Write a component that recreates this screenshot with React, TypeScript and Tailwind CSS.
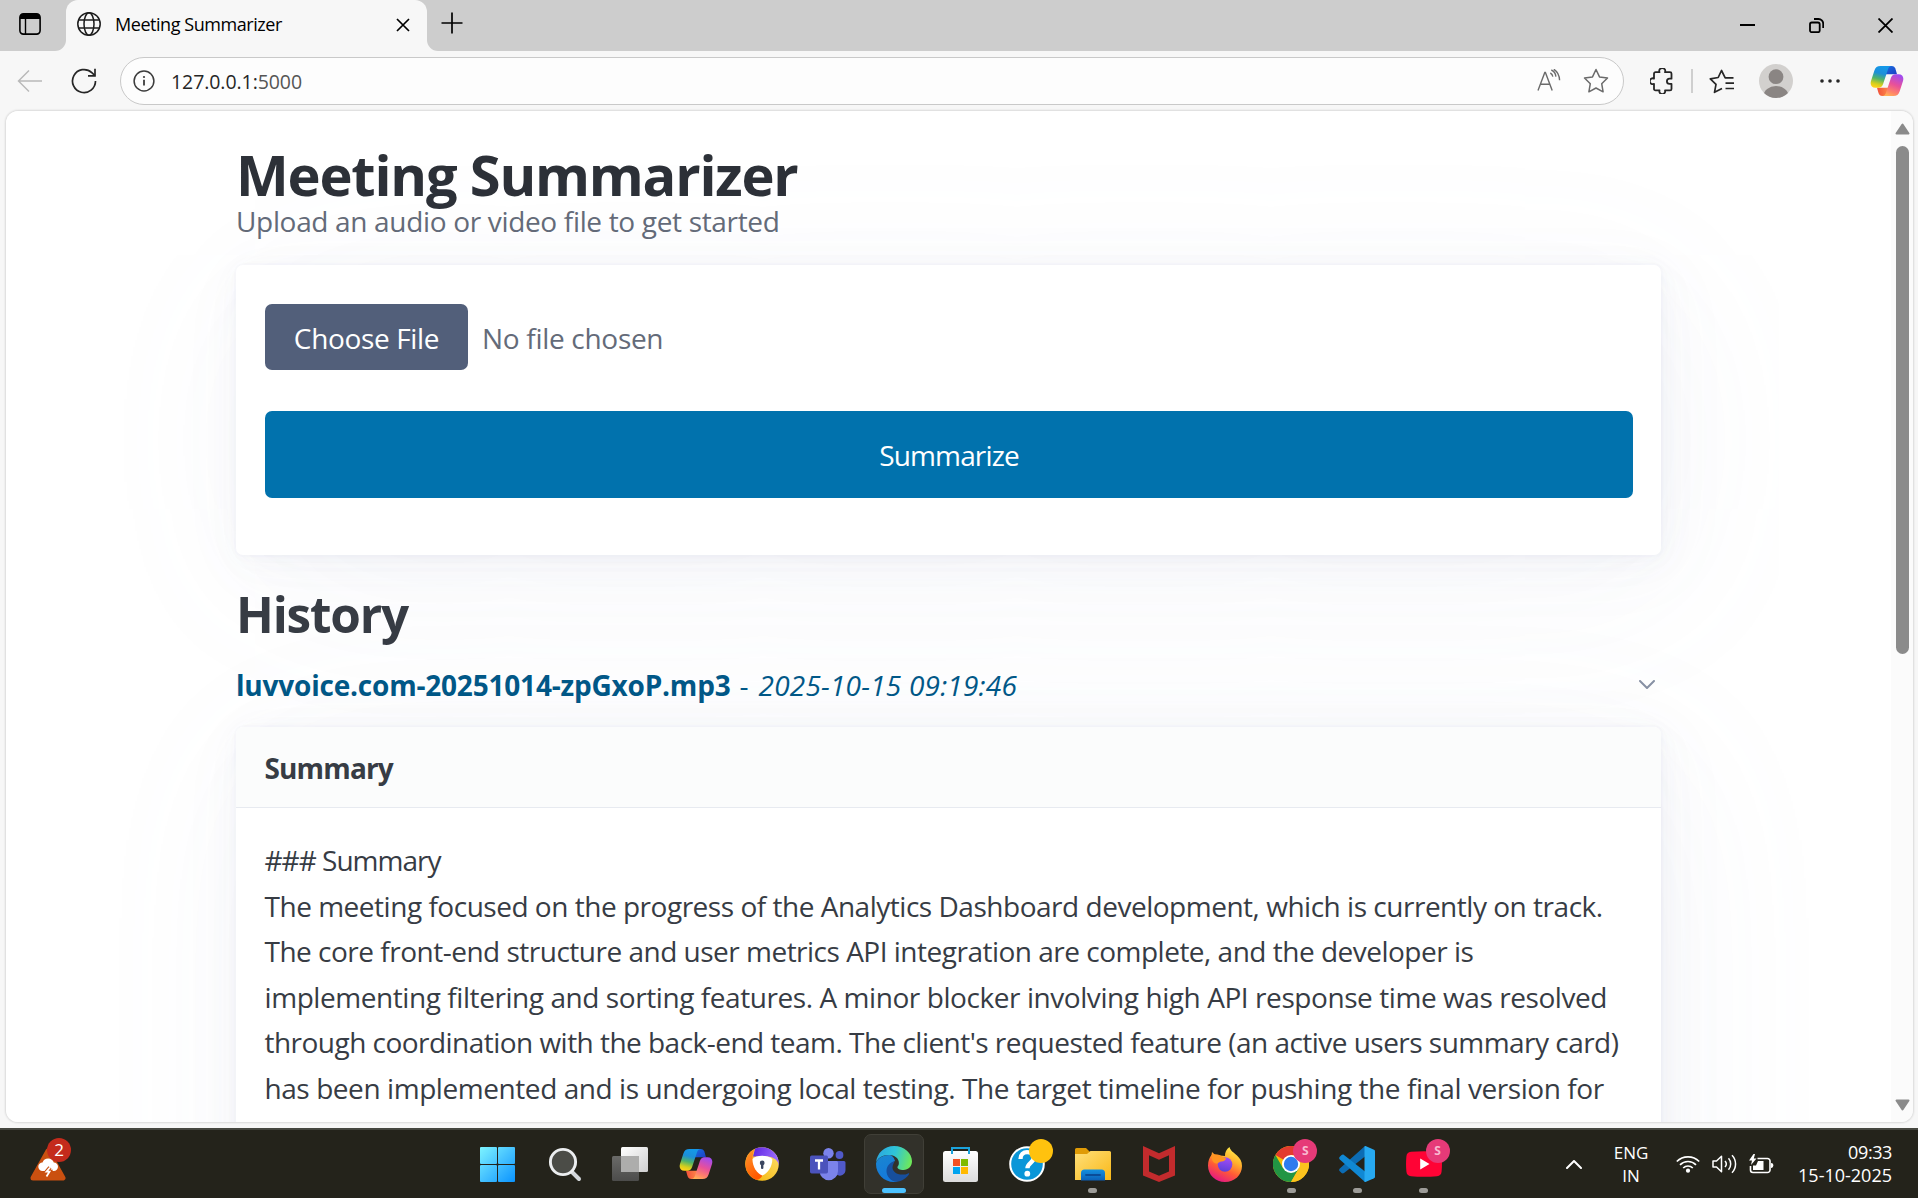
import type { ReactNode } from "react";

/* ---------- shared marks ---------- */

function CopilotMark({ id, className }: { id: string; className: string }) {
  return (
    <svg viewBox="0 0 34 32" className={className}>
      <defs>
        <linearGradient id={id + "a"} x1="0.6" y1="0" x2="0.35" y2="1">
          <stop offset="0.05" stopColor="#1598e8" />
          <stop offset="0.35" stopColor="#1c8fd8" />
          <stop offset="0.6" stopColor="#4fb36a" />
          <stop offset="0.85" stopColor="#d6cf1c" />
          <stop offset="1" stopColor="#ffd21a" />
        </linearGradient>
        <linearGradient id={id + "b"} x1="0.7" y1="0" x2="0.3" y2="1">
          <stop offset="0" stopColor="#a04bf0" />
          <stop offset="0.45" stopColor="#e8509a" />
          <stop offset="0.8" stopColor="#ff8468" />
          <stop offset="1" stopColor="#ffb056" />
        </linearGradient>
        <linearGradient id={id + "c"} x1="0" y1="0" x2="1" y2="1">
          <stop offset="0" stopColor="#1a6fe0" />
          <stop offset="1" stopColor="#1b3fc4" />
        </linearGradient>
        <linearGradient id={id + "d"} x1="0" y1="0" x2="1" y2="0">
          <stop offset="0" stopColor="#f0503a" />
          <stop offset="1" stopColor="#ff8a4a" />
        </linearGradient>
      </defs>
      <path d="M15 1h6.500c2.600 0 3.600 1.500 4.300 4l1.200 4.300H15z" fill={`url(#${id}c)`} />
      <path d="M19 31h-6.500c-2.600 0-3.600-1.500-4.300-4L7 22.700H19z" fill={`url(#${id}d)`} />
      <path d="M10.500 1H22c-2.500 0-3.400 1.300-4.300 4.200L13.600 17.500c-1 3.600-2.200 5.300-6 5.300H5.500C1.500 22.800-.1 20 1 16L4.400 5.600C5.400 2.400 7.200 1 10.500 1z" fill={`url(#${id}a)`} />
      <path d="M23.500 31H12c2.500 0 3.400-1.300 4.300-4.200L20.400 14.500c1-3.600 2.200-5.300 6-5.300h2.100c4 0 5.600 2.800 4.500 6.800l-3.400 10.400c-1 3.200-2.800 4.600-6.100 4.600z" fill={`url(#${id}b)`} />
    </svg>
  );
}

function Chevron({ up = false, className }: { up?: boolean; className: string }) {
  return (
    <svg viewBox="0 0 16 9" fill="none" stroke="currentColor" strokeWidth="2" strokeLinecap="round" strokeLinejoin="round" className={className}>
      <path d={up ? "M1 8l7-7 7 7" : "M1 1l7 7 7-7"} />
    </svg>
  );
}

/* ---------- browser chrome ---------- */

function TabStrip() {
  return (
    <div className="flex h-[51px] shrink-0 items-stretch bg-[#cdcdcd] text-black">
      <div className="flex w-[66px] items-center justify-center bg-[#f7f7f7]">
        <div className="flex h-full w-full items-center rounded-br-[11px] bg-[#cdcdcd] pl-[19px] pb-[3px]">
          <svg viewBox="0 0 22 22" className="size-[22px]" fill="none" stroke="currentColor" strokeWidth="1.6">
            <rect x="0.900" y="0.900" width="20.200" height="20.200" rx="3.500" />
            <path d="M1 4a3 3 0 0 1 3-3h14a3 3 0 0 1 3 3v2H1z" fill="currentColor" stroke="none" />
            <path d="M6.500 5v16" strokeWidth="1.400" />
          </svg>
        </div>
      </div>
      <div className="w-[361px] bg-[#cdcdcd]">
        <div className="flex h-full items-center rounded-t-[12px] bg-[#f7f7f7] pl-[11px] pr-[17px] pb-[3px]">
          <svg viewBox="0 0 24 24" className="size-6" fill="none" stroke="#1c1c1c" strokeWidth="1.500">
            <circle cx="12" cy="12" r="11.200" />
            <ellipse cx="12" cy="12" rx="5" ry="11.200" />
            <path d="M1.800 8h20.400M1.800 16h20.400" />
          </svg>
          <span className="ml-[14px] flex-1 whitespace-nowrap text-[18px] tracking-[-0.450px]">Meeting Summarizer</span>
          <svg viewBox="0 0 14 14" className="mt-[2px] size-[14px]" fill="none" stroke="currentColor" strokeWidth="1.700">
            <path d="M1 1l12 12M13 1L1 13" />
          </svg>
        </div>
      </div>
      <div className="flex flex-1 bg-[#f7f7f7]">
        <div className="flex flex-1 items-center rounded-bl-[11px] bg-[#cdcdcd] pl-[14px] pr-[25px]">
          <svg viewBox="0 0 22 22" className="mb-[5px] size-[22px]" fill="none" stroke="currentColor" strokeWidth="1.700">
            <path d="M11 .5v21M.5 11h21" />
          </svg>
          <div className="ml-auto flex items-center gap-[54px]">
            <svg viewBox="0 0 15 15" className="size-[15px]" fill="none" stroke="currentColor" strokeWidth="2">
              <path d="M0 7h15" />
            </svg>
            <svg viewBox="0 0 15 15" className="size-[15px]" fill="none" stroke="currentColor" strokeWidth="1.800">
              <rect x="1" y="4.500" width="9.700" height="9.700" rx="1.800" />
              <path d="M5 1h4.500A4.700 4.700 0 0 1 14.200 5.700V10" />
            </svg>
            <svg viewBox="0 0 15 15" className="size-[15px]" fill="none" stroke="currentColor" strokeWidth="1.800">
              <path d="M.5.5l14 14M14.500.5l-14 14" />
            </svg>
          </div>
        </div>
      </div>
    </div>
  );
}

function AddressRow() {
  return (
    <div className="flex h-[60px] shrink-0 items-center bg-[#f7f7f7] pl-[17px] pr-[14px] text-[#262626]">
      <svg viewBox="0 0 26 24" className="w-[26px] text-[#b9b9b9]" fill="none" stroke="currentColor" strokeWidth="1.500">
        <path d="M25 12H1.500M12 1.500L1.500 12 12 22.500" />
      </svg>
      <svg viewBox="0 0 26 26" className="ml-[28px] w-[26px]" fill="none" stroke="currentColor" strokeWidth="1.700">
        <path d="M24.500 13A11.500 11.500 0 1 1 20.800 4.600L24 7.700" />
        <path d="M24 .8v7h-7" />
      </svg>
      <div className="ml-[23px] flex h-12 w-[1504px] items-center rounded-full border-[1.500px] border-[#c9c9c9] bg-[#fdfdfd] pl-[12px] pr-[14px]">
        <svg viewBox="0 0 22 22" className="size-[22px]" fill="none" stroke="#3c3c3c" strokeWidth="1.500">
          <circle cx="11" cy="11" r="9.900" />
          <path d="M11 9.800v5.700" strokeWidth="1.800" />
          <circle cx="11" cy="7" r="1.100" fill="#3c3c3c" stroke="none" />
        </svg>
        <span className="ml-[16px] flex-1 pt-[1px] text-[19.500px] tracking-[-0.070px]">
          127.0.0.1:<span className="text-[#555]">5000</span>
        </span>
        <svg viewBox="0 0 24 22" className="mb-[3px] w-6" fill="none" stroke="#6b6b6b" strokeWidth="1.400">
          <path d="M1 21.500L7.800 3.500h.6l6.800 18M3.500 15.200h9.200" />
          <path d="M14.300 1c2.800 1.200 4.300 3.500 4.600 6.600M13.300 4c1.500.7 2.300 2 2.500 3.700M16.800.3c3.500 2 5.500 5.500 5.800 11" />
        </svg>
        <svg viewBox="0 0 26 26" className="ml-[22px] w-[26px]" fill="none" stroke="#6b6b6b" strokeWidth="1.500" strokeLinejoin="round">
          <path d="M13 1.500l3.500 7.400 8 1.100-5.800 5.700 1.400 8.100L13 20l-7.100 3.800 1.400-8.100L1.500 10l8-1.100z" />
        </svg>
      </div>
      <svg viewBox="0 0 24 26" className="ml-[26px] w-6" fill="none" stroke="currentColor" strokeWidth="1.800" strokeLinejoin="round">
        <path d="M5.500 4.200h4a3 3 0 1 1 5.500 0h5a1.500 1.500 0 0 1 1.500 1.500v5h-2a2.600 2.600 0 1 0 0 5.200h2v5a1.500 1.500 0 0 1-1.500 1.500h-5a2.900 2.900 0 1 1-5.500 0h-4a1.500 1.500 0 0 1-1.500-1.500v-5.100a2.900 2.900 0 1 1 0-5.200V5.700a1.500 1.500 0 0 1 1.500-1.500z" />
      </svg>
      <div className="ml-[17px] h-6 w-[1.500px] bg-[#cfcfcf]" />
      <svg viewBox="0 0 26 25" className="ml-[16px] w-[26px]" fill="none" stroke="currentColor" strokeWidth="1.700" strokeLinejoin="round">
        <path d="M24.500 8.800H16.200L12.500 1.500 9.200 8.500 1.300 9.800l5.700 5.500-1.500 8 7.500-3.800" />
        <path d="M16.500 14.200H25M16.500 19.500H25" />
      </svg>
      <svg viewBox="0 0 34 34" className="ml-[24px] w-[34px]">
        <clipPath id="avatar"><circle cx="17" cy="17" r="17" /></clipPath>
        <g clipPath="url(#avatar)">
          <rect width="34" height="34" fill="#d2d0ce" />
          <circle cx="17" cy="12.700" r="7.400" fill="#8a8583" />
          <ellipse cx="17" cy="32" rx="12.500" ry="10" fill="#8a8583" />
        </g>
      </svg>
      <svg viewBox="0 0 20 4" className="ml-[27px] w-5" fill="currentColor">
        <circle cx="2" cy="2" r="1.800" /><circle cx="10" cy="2" r="1.800" /><circle cx="18" cy="2" r="1.800" />
      </svg>
      <CopilotMark id="cpTop" className="ml-auto w-[34px]" />
    </div>
  );
}

/* ---------- page ---------- */

const SUMMARY_LINES: { text: string; spacing: string }[] = [
  { text: "### Summary", spacing: "tracking-[-1px]" },
  { text: "The meeting focused on the progress of the Analytics Dashboard development, which is currently on track.", spacing: "tracking-[-0.480px]" },
  { text: "The core front-end structure and user metrics API integration are complete, and the developer is", spacing: "tracking-[-0.500px]" },
  { text: "implementing filtering and sorting features. A minor blocker involving high API response time was resolved", spacing: "tracking-[-0.430px]" },
  { text: "through coordination with the back-end team. The client's requested feature (an active users summary card)", spacing: "tracking-[-0.530px]" },
  { text: "has been implemented and is undergoing local testing. The target timeline for pushing the final version for", spacing: "tracking-[-0.430px]" },
];

function Card({ className, children }: { className: string; children: ReactNode }) {
  return (
    <section
      className={
        "rounded-[7px] shadow-[0.44px_0.88px_5.3px_rgba(129,145,181,0.017),1px_2px_12.2px_rgba(129,145,181,0.024),1.9px_3.8px_22.8px_rgba(129,145,181,0.03),3.4px_6.8px_41px_rgba(129,145,181,0.036),6.3px_12.7px_76px_rgba(129,145,181,0.043),15.2px_30.4px_182px_rgba(129,145,181,0.06),0_0_0_1.9px_rgba(129,145,181,0.015)] " +
        className
      }
    >
      {children}
    </section>
  );
}

function Page() {
  return (
    <main className="flex-1 overflow-hidden bg-white pl-[230px] pt-[34px] text-[28px] text-[#373c44]">
      <div className="flex w-[1425px] flex-col">
        <h1 className="text-[56px] font-bold leading-[59px] tracking-[-1.200px] text-[#2d3138]">Meeting Summarizer</h1>
        <p className="leading-[34px] tracking-[-0.330px] text-[#646b79]">Upload an audio or video file to get started</p>

        <Card className="mt-[27px] h-[290px] bg-white pl-[29px] pr-[28px] pt-[39px]">
          <div className="flex items-center text-[#646b79]">
            <button className="h-[66px] w-[203px] rounded-[7px] bg-[#525f7a] pt-[2px] tracking-[-0.350px] text-white">Choose File</button>
            <span className="ml-[14px] pt-[2px] tracking-[-0.300px]">No file chosen</span>
          </div>
          <button className="mt-[41px] h-[87px] w-full rounded-[7px] bg-[#0172ad] tracking-[-0.850px] text-white">Summarize</button>
        </Card>

        <h2 className="mt-[32px] text-[49.500px] font-bold leading-[55px] tracking-[-1.200px]">History</h2>

        <div className="mt-[20px] flex h-[46px] items-center justify-between pr-[6px] leading-[46px] text-[#015887]">
          <div className="flex whitespace-pre">
            <strong className="font-bold tracking-[-0.200px]">luvvoice.com-20251014-zpGxoP.mp3</strong>
            <span className="ml-[9px] mr-[10px]">-</span>
            <em className="tracking-[0.200px]">2025-10-15 09:19:46</em>
          </div>
          <Chevron className="mb-[2px] w-4 text-[#8891a4]" />
        </div>

        <Card className="mt-[19px] h-[700px] bg-white">
          <header className="h-[81px] rounded-t-[7px] border-b-[1.500px] border-[#e7eaf0] bg-[#fbfcfc] pl-[28.500px] pt-[19px] font-bold leading-[45.600px] tracking-[-0.850px]">
            Summary
          </header>
          <div className="pl-[28.500px] pt-[30px] leading-[45.600px]">
            {SUMMARY_LINES.map((line) => (
              <p key={line.text} className={"whitespace-nowrap " + line.spacing}>{line.text}</p>
            ))}
          </div>
        </Card>
      </div>
    </main>
  );
}

function Scrollbar() {
  return (
    <aside className="flex w-[22px] shrink-0 flex-col items-center bg-[#fbfbfb] pb-[11px] pl-[1px] pt-[12px] text-[#8b8b8b]">
      <svg viewBox="0 0 15 12" className="w-[15px]" fill="currentColor" stroke="currentColor" strokeWidth="2" strokeLinejoin="round">
        <path d="M7.500 1.500L13.500 10.500h-12z" />
      </svg>
      <div className="mt-[11px] h-[508px] w-[13px] rounded-full bg-[#8b8b8b]" />
      <svg viewBox="0 0 15 12" className="mt-auto w-[15px]" fill="currentColor" stroke="currentColor" strokeWidth="2" strokeLinejoin="round">
        <path d="M7.500 10.500L1.500 1.500h12z" />
      </svg>
    </aside>
  );
}

/* ---------- taskbar ---------- */

function StartIcon() {
  return (
    <svg viewBox="0 0 35 35" className="size-[35px]">
      <linearGradient id="win" gradientUnits="userSpaceOnUse" x1="0" y1="0" x2="35" y2="35">
        <stop offset="0" stopColor="#7df4ff" /><stop offset="0.500" stopColor="#46c2ff" /><stop offset="1" stopColor="#0a94ff" />
      </linearGradient>
      <g fill="url(#win)">
        <rect width="17" height="17" rx="1" /><rect x="18" width="17" height="17" rx="1" />
        <rect y="18" width="17" height="17" rx="1" /><rect x="18" y="18" width="17" height="17" rx="1" />
      </g>
    </svg>
  );
}

function SearchIcon() {
  return (
    <svg viewBox="0 0 34 35" className="ml-[2px] w-[34px]" fill="none">
      <path d="M22.500 23.500L31 32" stroke="#d4d8dc" strokeWidth="4" strokeLinecap="round" />
      <circle cx="15" cy="15" r="12.600" fill="#4b4c47" stroke="#eceef0" strokeWidth="2.900" />
    </svg>
  );
}

function TaskViewIcon() {
  return (
    <svg viewBox="0 0 36 34" className="ml-[1px] w-9">
      <linearGradient id="tv1" x1="0" y1="0" x2="1" y2="1"><stop offset="0" stopColor="#fff" /><stop offset="1" stopColor="#cfcfcf" /></linearGradient>
      <linearGradient id="tv2" x1="0" y1="0" x2="0" y2="1"><stop offset="0" stopColor="#6a6a68" /><stop offset="1" stopColor="#4c4c4b" /></linearGradient>
      <rect y="9" width="27" height="25" rx="1.500" fill="url(#tv2)" />
      <rect x="9" width="27" height="25" rx="1.500" fill="url(#tv1)" />
      <path d="M9 9h18v16H10.500A1.500 1.500 0 0 1 9 23.500z" fill="#adadac" />
    </svg>
  );
}

function SecureBrowserIcon() {
  return (
    <svg viewBox="0 0 34 34" className="w-[34px]">
      <linearGradient id="sb1" x1="0" y1="0" x2="1" y2="0.300"><stop offset="0" stopColor="#5b21e0" /><stop offset="1" stopColor="#9b6bff" /></linearGradient>
      <linearGradient id="sb2" x1="0" y1="0" x2="0.400" y2="1"><stop offset="0" stopColor="#ff9a2e" /><stop offset="1" stopColor="#ff5a00" /></linearGradient>
      <linearGradient id="sb3" x1="0" y1="1" x2="1" y2="0"><stop offset="0" stopColor="#f2b200" /><stop offset="1" stopColor="#ffe070" /></linearGradient>
      <circle cx="17" cy="17" r="16.800" fill="url(#sb3)" />
      <path d="M10 1.700A17 17 0 0 1 33.800 19c.2-5-5-9.500-12-9.500H8z" fill="url(#sb1)" />
      <path d="M10 1.700A17 17 0 0 0 11.500 33C14 33 17 30 17.500 28L8 15C7 10 8 5 10 1.700z" fill="url(#sb2)" />
      <path d="M7.500 12c2-2 5.500-3.200 9.500-3.200s8 1.200 10.300 3.200c0 8-4.300 14-10 16.600C11.500 26 7.500 20 7.500 12z" fill="#fff" />
      <circle cx="17.200" cy="16" r="2.400" fill="#3b4660" /><rect x="16" y="17" width="2.400" height="5" rx="1" fill="#3b4660" />
    </svg>
  );
}

function TeamsIcon() {
  return (
    <svg viewBox="0 0 36 33" className="w-9">
      <circle cx="29.500" cy="7" r="3.900" fill="#5059c9" />
      <path d="M25 13h9a1.500 1.500 0 0 1 1.500 1.500V22a5.700 5.700 0 0 1-9 4.600z" fill="#5059c9" />
      <circle cx="18.500" cy="5.300" r="5.200" fill="#7b83eb" />
      <path d="M10 13h16.500a1.500 1.500 0 0 1 1.500 1.500V23a9.200 9.200 0 0 1-18.400 0z" fill="#7b83eb" />
      <rect y="7.500" width="18" height="18" rx="1.700" fill="#4b53bc" />
      <path d="M5 12.500h8M9 12.500v9" stroke="#fff" strokeWidth="2.300" />
    </svg>
  );
}

function EdgeIcon() {
  return (
    <svg viewBox="0 0 36 36" className="w-9">
      <linearGradient id="ed1" x1="0" y1="0.300" x2="1" y2="0.500"><stop offset="0" stopColor="#2aa6e0" /><stop offset="0.500" stopColor="#2fc5d8" /><stop offset="1" stopColor="#6ee85a" /></linearGradient>
      <linearGradient id="ed2" x1="0" y1="0" x2="0.300" y2="1"><stop offset="0" stopColor="#1a86cf" /><stop offset="1" stopColor="#1479dc" /></linearGradient>
      <path d="M0 16.500C1 7 8.500 0 18 0c10.500 0 18 7.500 18 15.300 0 5-3.600 8.700-8.600 8.700-3.600 0-6-1.200-6-2.700 0-1 1.500-1.700 1.500-4.300C22.900 12 18.500 9 13 9 6 9 1.500 12.500 0 16.500z" fill="url(#ed1)" />
      <path d="M13 9c-7 0-12 4-13 8.500V18c0 10 8 18 18 18 1.500 0 3-.2 4-.5-6-1-9.500-6-9.500-11 0-4.500 2.500-8 6.500-9.500C18 11.500 16 9 13 9z" fill="url(#ed2)" />
      <path d="M18.500 15.200C14 16.200 10.500 20 10.500 25c0 5.500 4.500 10.500 10 10.800 5.500-.5 10-3.500 12.500-7.500.5-.8-.2-1.300-1-.9-1.500.8-3.500 1.200-5.500 1.200-6.500 0-11-4-9.800-8.700.4-1.800 1.300-3 1.800-4.700z" fill="#174f9c" />
    </svg>
  );
}

function StoreIcon() {
  return (
    <svg viewBox="0 0 35 35" className="w-[35px]">
      <linearGradient id="st" x1="0" y1="0" x2="0" y2="1"><stop offset="0" stopColor="#fff" /><stop offset="1" stopColor="#dcdcdc" /></linearGradient>
      <rect y="4" width="35" height="31" rx="2.500" fill="url(#st)" />
      <path d="M9 7V1h17v6" fill="none" stroke="#1ba3dc" strokeWidth="2" />
      <rect x="10" y="12" width="7" height="7" fill="#f25022" /><rect x="18" y="12" width="7" height="7" fill="#7fba00" />
      <rect x="10" y="20" width="7" height="7" fill="#00a4ef" /><rect x="18" y="20" width="7" height="7" fill="#ffb900" />
    </svg>
  );
}

function HelpIcon() {
  return (
    <svg viewBox="0 0 36 36" className="w-9">
      <circle cx="18" cy="18" r="16.800" fill="#0a96d8" stroke="#fff" strokeWidth="2" />
      <path d="M11.500 13c0-4.500 3-6.800 6.600-6.800 4 0 6.600 2.300 6.600 5.600 0 5-6.300 5.200-6.300 10.500" fill="none" stroke="#fff" strokeWidth="4.300" />
      <circle cx="18.300" cy="27.700" r="2.900" fill="#fff" />
    </svg>
  );
}

function ExplorerIcon() {
  return (
    <svg viewBox="0 0 36 34" className="w-9">
      <linearGradient id="ex" x1="0" y1="0" x2="1" y2="1"><stop offset="0" stopColor="#ffe07a" /><stop offset="1" stopColor="#f9b818" /></linearGradient>
      <linearGradient id="ex2" x1="0" y1="0" x2="0" y2="1"><stop offset="0" stopColor="#1490df" /><stop offset="1" stopColor="#0b60b8" /></linearGradient>
      <path d="M0 2.500A1.500 1.500 0 0 1 1.500 1H11l4 4H36v4H0z" fill="#e09b06" />
      <path d="M0 7h12l3.500-3H34.500A1.500 1.500 0 0 1 36 5.500V33H0z" fill="url(#ex)" />
      <path d="M6 33.500V26a3.500 3.500 0 0 1 3.500-3.500h17A3.500 3.500 0 0 1 30 26v7.500z" fill="url(#ex2)" />
      <path d="M11 28h14" stroke="#0a4c98" strokeWidth="1.800" strokeLinecap="round" />
    </svg>
  );
}

function ShieldMIcon() {
  return (
    <svg viewBox="0 0 32 36" className="w-8">
      <path fillRule="evenodd" fill="#c22b2d" d="M0 0l16 7.200L32 0v29.500L16 36 0 29.500zM6 9.200v16.300l10 4.300 10-4.300V9.200l-10 4.600z" />
    </svg>
  );
}

function FirefoxIcon() {
  return (
    <svg viewBox="0 0 34 35" className="w-[34px]">
      <linearGradient id="ff" x1="0.800" y1="0" x2="0.300" y2="1"><stop offset="0" stopColor="#fff44f" /><stop offset="0.350" stopColor="#ffb22c" /><stop offset="0.650" stopColor="#ff5a36" /><stop offset="1" stopColor="#e31587" /></linearGradient>
      <linearGradient id="ff2" x1="0.500" y1="0" x2="0.300" y2="1"><stop offset="0" stopColor="#a24df6" /><stop offset="1" stopColor="#5a3fd8" /></linearGradient>
      <path d="M21.500 0c1 4 4.500 5.500 7.500 8.500 3 2.800 5 6 5 10.500C34 28 26.500 35 17 35S0 28 0 18.500C0 14 1.500 10.500 3.500 8l.5-3 3.500 3.200c1.500-.3 3-.2 4.500.3L17 9c-.3-3.500 1.500-7 4.500-9z" fill="url(#ff)" />
      <circle cx="17" cy="17.500" r="7.300" fill="url(#ff2)" />
      <path d="M3.500 8c2-1 5.500-1 8 0 1.800.7 3.500 2.700 6.500 3-.2 2.200-2 3.200-4.500 3.500-2 .3-2.500 1.200-4 1.800C6 17.500 3 13 3.500 8z" fill="#ff9422" />
    </svg>
  );
}

function ChromeIcon() {
  return (
    <svg viewBox="0 0 36 36" className="w-9">
      <circle cx="18" cy="18" r="18" fill="#fbbc04" />
      <path d="M18 18L2.400 9A18 18 0 0 1 33.600 9H18z" fill="#e33b2e" />
      <path d="M2.400 9A18 18 0 0 0 18 36l7.800-13.500L18 18 10.200 22.500z" fill="#229544" />
      <path d="M18 9h15.600A18 18 0 0 1 18 36l7.800-13.500z" fill="#fcc31e" />
      <circle cx="18" cy="18" r="9" fill="#fff" /><circle cx="18" cy="18" r="7.200" fill="#2f7bee" />
    </svg>
  );
}

function CodeIcon() {
  return (
    <svg viewBox="0 0 36 36" className="w-9">
      <path d="M26 0v10.500L5 27c-1 .6-1.700.5-2.400-.1L.8 25.300c-.9-.8-.9-2 0-2.800z" fill="#0c6cb4" />
      <path d="M26 36V25.500L5 9c-1-.6-1.700-.5-2.400.1L.8 10.700c-.9.800-.9 2 0 2.800z" fill="#1088d4" />
      <path d="M26.500 0L35 3.700c.6.300 1 .8 1 1.500v25.600c0 .7-.4 1.200-1 1.500L26.500 36c-.8 0-1-.5-1-1.500v-33c0-1 .2-1.500 1-1.500z" fill="#27a9f1" />
    </svg>
  );
}

function YoutubeIcon() {
  return (
    <svg viewBox="0 0 36 26" className="w-9">
      <path d="M5 .8C13 0 23 0 31 .8c3 .3 4.300 1.800 4.600 4.700.5 5 .5 10 0 15-.3 2.900-1.600 4.400-4.600 4.700-8 .8-18 .8-26 0-3-.3-4.300-1.800-4.600-4.700-.5-5-.5-10 0-15C.7 2.600 2 1.100 5 .8z" fill="#ff0335" />
      <path d="M14.200 7.500l9.300 5.500-9.300 5.500z" fill="#fff" />
    </svg>
  );
}

function ProfileBadge() {
  return (
    <span className="absolute right-[7px] top-[9px] flex size-6 items-center justify-center rounded-full bg-[#e63a78] text-[12px] font-bold text-[#f9b9d0]">S</span>
  );
}

type TaskItem = { name: string; icon: ReactNode; running?: boolean; active?: boolean; badge?: ReactNode };

const TASKS: TaskItem[] = [
  { name: "Start", icon: <StartIcon /> },
  { name: "Search", icon: <SearchIcon /> },
  { name: "Task view", icon: <TaskViewIcon /> },
  { name: "Copilot", icon: <CopilotMark id="cpTask" className="w-[34px]" /> },
  { name: "Secure browser", icon: <SecureBrowserIcon /> },
  { name: "Teams", icon: <TeamsIcon /> },
  { name: "Edge", icon: <EdgeIcon />, active: true },
  { name: "Store", icon: <StoreIcon /> },
  { name: "Help", icon: <HelpIcon />, badge: <span className="absolute right-[7px] top-[9px] size-6 rounded-full bg-[#ffc20e]" /> },
  { name: "Explorer", icon: <ExplorerIcon />, running: true },
  { name: "Security", icon: <ShieldMIcon /> },
  { name: "Firefox", icon: <FirefoxIcon /> },
  { name: "Chrome", icon: <ChromeIcon />, running: true, badge: <ProfileBadge /> },
  { name: "Code", icon: <CodeIcon />, running: true },
  { name: "YouTube", icon: <YoutubeIcon />, running: true, badge: <ProfileBadge /> },
];

function Taskbar() {
  return (
    <footer className="flex h-[70px] shrink-0 border-t-2 border-[#464740] bg-[#24231b] text-white">
      <div className="w-[464.500px] pl-[30px] pt-[17px]">
        <div className="relative w-9">
          <svg viewBox="0 0 36 34" className="w-9">
            <path d="M18 4L33 31H3z" fill="#ca5010" stroke="#ca5010" strokeWidth="5" strokeLinejoin="round" />
            <path d="M12.500 24a4.200 4.200 0 0 1 0-8.400 6 6 0 0 1 11.300 0 4.200 4.200 0 0 1 0 8.400z" fill="#fff" />
            <path d="M20 20.500l-3.500 4.200h3L16.500 29.500" fill="none" stroke="#ca5010" strokeWidth="4" />
            <path d="M20 20.500l-3.500 4.200h3L16.500 29.500" fill="none" stroke="#fff" strokeWidth="1.800" />
          </svg>
          <span className="absolute -right-[5px] -top-[9px] flex size-6 items-center justify-center rounded-full bg-[#c42b1c] text-[17px]">2</span>
        </div>
      </div>
      <nav className="flex">
        {TASKS.map((t) => (
          <div key={t.name} className="relative flex w-[66.150px] justify-center pt-1">
            <div className={"flex h-[60px] w-[60px] items-center justify-center rounded-[7px] " + (t.active ? "border border-[#403f37] bg-[#32312a]" : "")}>
              {t.icon}
            </div>
            {t.active && <span className="absolute bottom-[5px] h-[5px] w-6 rounded-full bg-[#4cc2ff]" />}
            {t.running && <span className="absolute bottom-[5px] h-[5px] w-[9px] rounded-full bg-[#9d9c98]" />}
            {t.badge}
          </div>
        ))}
      </nav>
      <div className="ml-auto flex items-center pr-[26px] text-[18px] leading-[23px]">
        <Chevron up className="w-4" />
        <div className="ml-[31px] w-[36px] text-center text-[17px]">
          <div>ENG</div>
          <div>IN</div>
        </div>
        <svg viewBox="0 0 24 18" className="ml-[27px] w-6" fill="none" stroke="currentColor" strokeWidth="1.700">
          <path d="M.8 6.500a15.800 15.800 0 0 1 22.400 0M4 9.800a11.300 11.300 0 0 1 16 0M7.200 13a6.800 6.800 0 0 1 9.600 0" />
          <circle cx="12" cy="15.700" r="2.100" fill="currentColor" stroke="none" />
        </svg>
        <svg viewBox="0 0 25 20" className="ml-[12px] w-[25px]" fill="none" stroke="currentColor" strokeWidth="1.500" strokeLinejoin="round">
          <path d="M1 7v6h3.500l5 4.800V2.200L4.500 7z" />
          <path d="M13 7a4.500 4.500 0 0 1 0 6M16.500 4.300a8.500 8.500 0 0 1 0 11.400M20 1.200a12.700 12.700 0 0 1 0 17.600" />
        </svg>
        <svg viewBox="0 0 25 20" className="ml-[12px] w-[25px]" fill="none" stroke="currentColor" strokeWidth="1.600">
          <path d="M8.500 4.500H18.500a2.500 2.500 0 0 1 2.500 2.500v9a2.500 2.500 0 0 1-2.500 2.500H4A2.500 2.500 0 0 1 1.500 16V12" />
          <path d="M9 7h5.500v9H4v-4.500h3z" fill="currentColor" stroke="none" />
          <path d="M4.500 0L0 6.500h3L2 11l5.500-6.500H4.800L6 0z" fill="currentColor" stroke="none" />
          <path d="M22 9c1.500 0 2.300.8 2.300 2.300S23.500 14 22 14z" fill="currentColor" stroke="none" />
        </svg>
        <div className="ml-[24px] w-[94px] whitespace-nowrap text-right">
          <div className="tracking-[-0.400px]">09:33</div>
          <div>15-10-2025</div>
        </div>
      </div>
    </footer>
  );
}

export default function App() {
  return (
    <div className="flex h-[1198px] w-[1918px] flex-col overflow-hidden bg-[#f7f7f7] font-['Open_Sans','Noto_Sans',sans-serif]">
      <TabStrip />
      <AddressRow />
      <div className="flex min-h-0 flex-1 pb-[6px] pl-[6px] pr-[5px]">
        <div className="flex flex-1 overflow-hidden rounded-[12px] shadow-[0_0_2px_1px_rgba(0,0,0,0.12)]">
          <Page />
          <Scrollbar />
        </div>
      </div>
      <Taskbar />
    </div>
  );
}
